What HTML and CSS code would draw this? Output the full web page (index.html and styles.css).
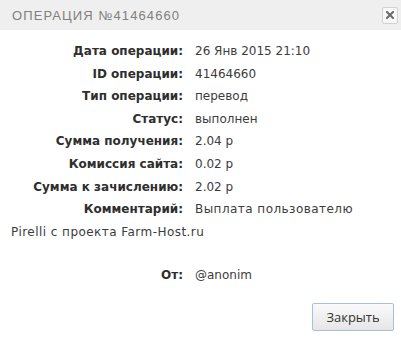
FILE: index.html
```html
<!DOCTYPE html>
<html lang="ru">
<head>
  <meta charset="UTF-8" />
  <title>Операция №41464660</title>
  <link rel="stylesheet" href="styles.css">
</head>
<body>
  <div class="dialog">
    <!-- TITLE BAR -->
    <div class="titlebar">
      <span class="title">Операция №41464660</span>
      <button class="close-x" title="Закрыть">
        <svg width="8" height="8" viewBox="0 0 8 8">
          <path d="M1 1 L7 7 M7 1 L1 7" stroke="#6a6a6a" stroke-width="2" stroke-linecap="square" />
        </svg>
      </button>
    </div>

    <!-- DETAILS -->
    <div class="content">
      <div class="row"><span class="label">Дата операции:</span><span class="value">26 Янв 2015 21:10</span></div>
      <div class="row"><span class="label">ID операции:</span><span class="value">41464660</span></div>
      <div class="row"><span class="label">Тип операции:</span><span class="value">перевод</span></div>
      <div class="row"><span class="label">Статус:</span><span class="value">выполнен</span></div>
      <div class="row"><span class="label">Сумма получения:</span><span class="value">2.04 р</span></div>
      <div class="row"><span class="label">Комиссия сайта:</span><span class="value">0.02 р</span></div>
      <div class="row"><span class="label">Сумма к зачислению:</span><span class="value">2.02 р</span></div>
      <div class="row comment"><span class="label">Комментарий:</span><span class="value">Выплата пользователю Pirelli с проекта Farm-Host.ru</span></div>
      <div class="row from"><span class="label">От:</span><span class="value">@anonim</span></div>
    </div>

    <!-- BUTTONS -->
    <div class="buttons">
      <button class="btn">Закрыть</button>
    </div>
  </div>
</body>
</html>
```

FILE: styles.css
```css
:root {
  --bar-bg: #efefef;
  --label-color: #2e2e2e;
  --value-color: #3c3c3c;
  --title-color: #808080;
  --font-family: "DejaVu Sans", Verdana, sans-serif;
}
* {
  margin: 0;
  padding: 0;
  box-sizing: border-box;
}
body {
  background: #ffffff;
  font-family: var(--font-family);
}
.dialog {
  width: 401px;
  height: 339px;
  display: flex;
  flex-direction: column;
}

/* Title bar */
.titlebar {
  height: 30px;
  background: var(--bar-bg);
  display: flex;
  align-items: center;
  justify-content: space-between;
  padding: 0 3px 0 12px;
}
.title {
  text-transform: uppercase;
  color: var(--title-color);
  font-family: "Liberation Sans", Arial, sans-serif;
  font-size: 13px;
  letter-spacing: 1.1px;
}
.close-x {
  width: 16px;
  height: 17px;
  border: 1px solid #d2d2d2;
  border-radius: 2px;
  background: #f7f7f7;
  display: flex;
  align-items: center;
  justify-content: center;
}

/* Details */
.content {
  padding: 10px 11px 0 11px;
  flex: 1;
}
.row {
  font-size: 12px;
  line-height: 22.6px;
}
.label {
  display: inline-block;
  width: 172px;
  text-align: right;
  font-weight: bold;
  color: var(--label-color);
  margin-right: 12px;
}
.value {
  color: var(--value-color);
}
.comment .value {
  letter-spacing: 0.45px;
}
.from {
  margin-top: 21px;
}

/* Buttons */
.buttons {
  display: flex;
  justify-content: flex-end;
  padding: 0 7px 8px 0;
}
.btn {
  width: 82px;
  height: 28px;
  font-family: "Open Sans", sans-serif;
  font-size: 13px;
  color: #333;
  border: 1px solid #a9c0dd;
  border-radius: 2px;
  background: linear-gradient(#fafafa, #e6e6e6);
}
```
